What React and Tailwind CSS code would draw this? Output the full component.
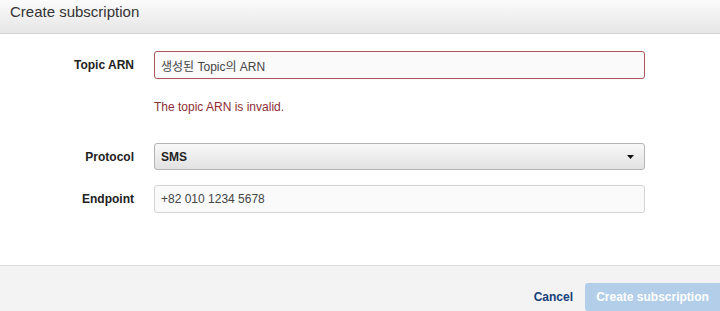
import React from "react";

const font = { fontFamily: '"Liberation Sans", Arial, "Noto Sans CJK KR", sans-serif' };

function Row({ label, children, className = "" }) {
  return (
    <div className={`flex items-center gap-[20px] ${className}`}>
      <label className="w-[134px] text-right text-[12px] font-bold text-[#222]">{label}</label>
      {children}
    </div>
  );
}

export default function App() {
  return (
    <div
      className="w-[720px] h-[311px] bg-white flex flex-col overflow-hidden"
      style={font}
    >
      {/* HEADER */}
      <div className="h-[34px] shrink-0 border-b border-[#d3d3d3] bg-gradient-to-b from-[#fbfbfb] to-[#e6e6e6] px-[10px] pt-[2px]">
        <h2 className="text-[15px] leading-[20px] text-[#333]">Create subscription</h2>
      </div>

      {/* FORM */}
      <div className="flex-1 pt-[17px]">
        <Row label="Topic ARN">
          <input
            className="w-[491px] h-[28px] rounded-[3px] border border-[#a9575b] bg-[#fafafa] px-[6px] text-[12px] text-[#444] outline-none"
            style={font}
            defaultValue="생성된 Topic의 ARN"
          />
        </Row>
        <p className="ml-[154px] mt-[21px] text-[12px] leading-[14px] text-[#8e2d33]">
          The topic ARN is invalid.
        </p>

        <Row label="Protocol" className="mt-[29px]">
          <div className="w-[491px] h-[27px] rounded-[3px] border border-[#b4b4b4] bg-gradient-to-b from-[#f8f8f8] to-[#e2e2e2] flex items-center justify-between pl-[6px] pr-[10px]">
            <span className="text-[12px] font-bold text-[#222]">SMS</span>
            <svg width="7" height="4" viewBox="0 0 7 4">
              <path d="M0 0h7L3.5 4z" fill="#111" />
            </svg>
          </div>
        </Row>

        <Row label="Endpoint" className="mt-[15px]">
          <input
            className="w-[491px] h-[28px] rounded-[3px] border border-[#d3d3d3] bg-[#fafafa] px-[6px] text-[12px] text-[#444] outline-none"
            style={font}
            defaultValue="+82 010 1234 5678"
          />
        </Row>
      </div>

      {/* FOOTER */}
      <div className="h-[46px] shrink-0 border-t border-[#dedede] bg-[#f3f3f3] flex items-start justify-end gap-[12px] pt-[17px]">
        <button className="h-[27px] text-[12px] font-bold text-[#163f7a]">Cancel</button>
        <button className="w-[135px] h-[28px] rounded-l-[3px] bg-[#b3cee9] text-[12px] font-bold text-white">
          Create subscription
        </button>
      </div>
    </div>
  );
}
